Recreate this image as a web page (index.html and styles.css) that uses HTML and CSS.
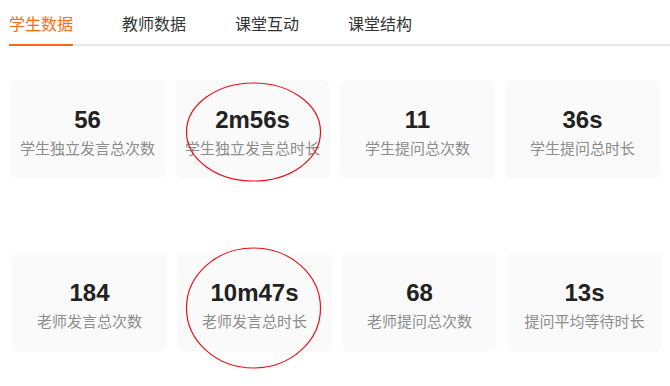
FILE: index.html
```html
<!DOCTYPE html>
<html lang="zh-CN">
<head>
    <meta charset="UTF-8">
    <meta name="viewport" content="width=device-width, initial-scale=1.0">
    <title>课堂数据</title>
    <link rel="stylesheet" href="styles.css">
</head>
<body>
    <div class="tabs">
        <a class="tab active">学生数据</a>
        <a class="tab">教师数据</a>
        <a class="tab">课堂互动</a>
        <a class="tab">课堂结构</a>
    </div>

    <div class="cards">
        <div class="card">
            <div class="num">56</div>
            <div class="label">学生独立发言总次数</div>
        </div>
        <div class="card">
            <div class="num">2m56s</div>
            <div class="label">学生独立发言总时长</div>
        </div>
        <div class="card">
            <div class="num">11</div>
            <div class="label">学生提问总次数</div>
        </div>
        <div class="card">
            <div class="num">36s</div>
            <div class="label">学生提问总时长</div>
        </div>
    </div>

    <div class="cards second">
        <div class="card">
            <div class="num">184</div>
            <div class="label">老师发言总次数</div>
        </div>
        <div class="card">
            <div class="num">10m47s</div>
            <div class="label">老师发言总时长</div>
        </div>
        <div class="card">
            <div class="num">68</div>
            <div class="label">老师提问总次数</div>
        </div>
        <div class="card">
            <div class="num">13s</div>
            <div class="label">提问平均等待时长</div>
        </div>
    </div>

    <!-- hand-drawn marks over the two duration cards -->
    <svg class="marks" width="670" height="386" viewBox="0 0 670 386">
        <ellipse cx="253.5" cy="132" rx="67" ry="49" />
        <ellipse cx="253.5" cy="308" rx="67" ry="60" />
    </svg>
</body>
</html>
```

FILE: styles.css
```css
body {
    margin: 0;
    background: #fff;
    font-family: "Liberation Sans", "Noto Sans CJK SC", sans-serif;
    position: relative;
    width: 670px;
    height: 386px;
    overflow: hidden;
}
.tabs {
    display: flex;
    gap: 49px;
    margin-left: 9px;
    border-bottom: 2px solid #e4e7ed;
}
.tab {
    font-family: "Noto Sans CJK SC", sans-serif;
    font-size: 16px;
    line-height: 22px;
    width: 64px;
    padding: 12px 0 10px;
    margin-bottom: -2px;
    border-bottom: 2px solid transparent;
    color: #333;
    cursor: pointer;
    white-space: nowrap;
}
.tab.active {
    color: #ff6a10;
    border-bottom-color: #ff6a10;
}
.cards {
    display: grid;
    grid-template-columns: repeat(4, 155px);
    gap: 10px;
    margin: 34px 0 0 10px;
}
.cards.second {
    margin: 75px 0 0 12px;
}
.card {
    height: 98px;
    box-sizing: border-box;
    padding-top: 26px;
    background: #fafafa;
    border-radius: 6px;
    text-align: center;
}
.num {
    font-size: 24px;
    font-weight: bold;
    line-height: 28px;
    color: #222;
}
.label {
    font-family: "Noto Sans CJK SC", sans-serif;
    font-size: 15px;
    line-height: 20px;
    margin-top: 4px;
    color: #8c8c8c;
    white-space: nowrap;
}
.marks {
    position: absolute;
    top: 0;
    left: 0;
    pointer-events: none;
}
.marks ellipse {
    fill: none;
    stroke: #e8111a;
    stroke-width: 1.2;
}
```
